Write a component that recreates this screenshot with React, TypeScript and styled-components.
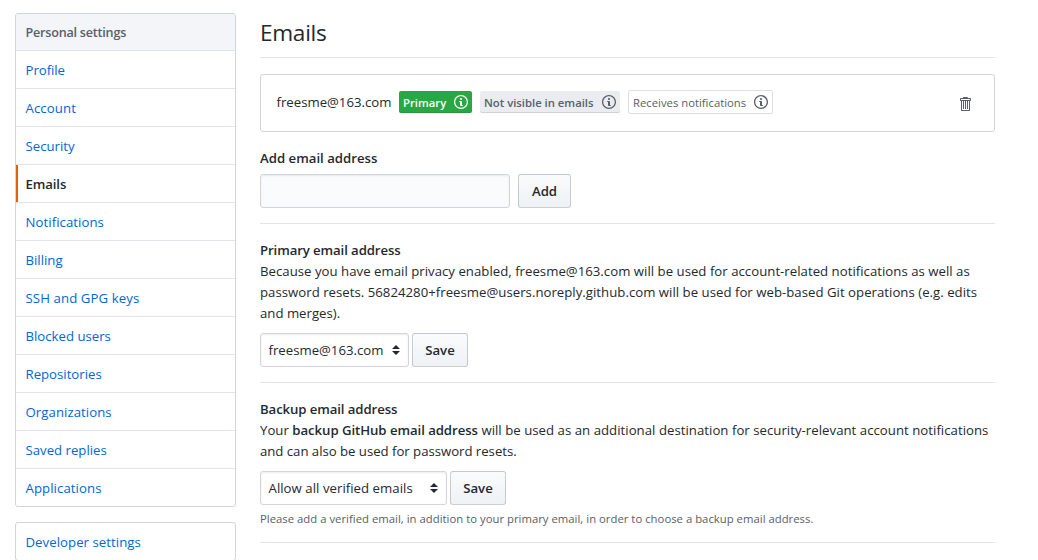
import React from "react";
import styled, { createGlobalStyle } from "styled-components";

const GlobalStyle = createGlobalStyle`
  * { box-sizing: border-box; }
  body {
    margin: 0;
    height: 560px;
    overflow: hidden;
    background: #fff;
    color: #24292e;
    font: 13.2px/21px "Open Sans", "Noto Sans", sans-serif;
  }
`;

const Page = styled.div`
  display: flex;
  align-items: flex-start;
  gap: 24px;
  height: 560px;
  padding: 13px 43px 0 15px;
  overflow: hidden;
`;

const Sidebar = styled.aside`
  display: flex;
  flex-direction: column;
  gap: 15px;
  width: 221px;
  flex: none;
`;

const Menu = styled.nav`
  border: 1px solid #d1d5da;
  border-radius: 3px;
  overflow: hidden;
`;

const MenuHeading = styled.div`
  height: 37px;
  padding: 9px 9.5px 7px;
  background: #f3f5f8;
  border-bottom: 1px solid #e1e4e8;
  color: #586069;
  font-size: 12.6px;
  font-weight: 600;
  line-height: 20px;
`;

const MenuItem = styled.a<{ $active?: boolean }>`
  display: block;
  height: 38px;
  padding: 9px 9.5px 7px;
  border-bottom: 1px solid #e1e4e8;
  color: ${(p) => (p.$active ? "#24292e" : "#0366d6")};
  font-weight: ${(p) => (p.$active ? 600 : 400)};
  box-shadow: ${(p) => (p.$active ? "inset 2px 0 0 #e36209" : "none")};
  &:last-child { height: 37px; border-bottom: 0; }
`;

const Fit = styled.span<{ $ls?: number }>`
  letter-spacing: ${(p) => p.$ls ?? 0}px;
  white-space: nowrap;
`;

const Main = styled.main`
  width: 735px;
  flex: none;
`;

const Title = styled.h2`
  margin: 0 0 16px;
  height: 45px;
  padding-top: 2px;
  border-bottom: 1px solid #e1e4e8;
  font-size: 22.6px;
  font-weight: 400;
  line-height: 36px;
`;

const EmailBox = styled.div`
  display: flex;
  align-items: center;
  height: 58px;
  padding: 0 23px 2px 15.5px;
  border: 1px solid #d1d5da;
  border-radius: 3px;
`;

const Address = styled.span`
  width: 115px;
  margin-right: 7.5px;
`;

const Badge = styled.span<{ $kind: "primary" | "muted" | "outline"; $width: number }>`
  display: flex;
  align-items: center;
  justify-content: space-between;
  width: ${(p) => p.$width}px;
  height: ${(p) => (p.$kind === "outline" ? 24 : 22)}px;
  margin-right: 8px;
  padding: 0 4px;
  border-radius: 2px;
  font-size: 11.3px;
  font-weight: ${(p) => (p.$kind === "outline" ? 400 : 600)};
  color: ${(p) => (p.$kind === "primary" ? "#fff" : "#586069")};
  background: ${(p) => ({ primary: "#28a745", muted: "#eaecef", outline: "#fff" })[p.$kind]};
  border: ${(p) => (p.$kind === "outline" ? "1px solid #dcdfe2" : "0")};
  box-shadow: ${(p) => (p.$kind === "outline" ? "none" : "inset 0 -1px 0 rgba(27,31,35,.12)")};
`;

const Icon = styled.svg`
  display: block;
  flex: none;
  fill: currentColor;
`;

const TrashButton = styled.span`
  margin-left: auto;
  padding-top: 4px;
  color: #586069;
`;

const Section = styled.section<{ $top: number; $height: number }>`
  height: ${(p) => p.$height}px;
  padding-top: ${(p) => p.$top}px;
  border-bottom: 1px solid #e1e4e8;
`;

const Label = styled.div`
  font-weight: 600;
`;

const Row = styled.div<{ $gap: number; $top: number }>`
  display: flex;
  gap: ${(p) => p.$gap}px;
  margin-top: ${(p) => p.$top}px;
`;

const Input = styled.input`
  width: 250px;
  height: 34px;
  border: 1px solid #d1d5da;
  border-radius: 3px;
  background: #fafbfc;
  box-shadow: inset 0 1px 2px rgba(27, 31, 35, 0.075);
`;

const Button = styled.button<{ $width: number }>`
  width: ${(p) => p.$width}px;
  height: 34px;
  padding: 0;
  border: 1px solid rgba(27, 31, 35, 0.2);
  border-radius: 3px;
  background: linear-gradient(-180deg, #fafbfc, #eff3f6 90%);
  color: #24292e;
  font: inherit;
  font-weight: 600;
`;

const Select = styled.div<{ $width: number }>`
  display: flex;
  align-items: center;
  justify-content: space-between;
  width: ${(p) => p.$width}px;
  height: 34px;
  padding: 0 8px 0 7.5px;
  border: 1px solid #d1d5da;
  border-radius: 3px;
  box-shadow: inset 0 1px 2px rgba(27, 31, 35, 0.075);
`;

const TextLine = styled.div`
  height: 21px;
`;

const Strong = styled.b`
  font-weight: 600;
  letter-spacing: -0.06px;
`;

const Note = styled.div`
  margin-top: 3px;
  font-size: 11.3px;
  color: #586069;
`;

const InfoIcon = () => (
  <Icon width="14" height="16" viewBox="0 0 14 16">
    <path
      fillRule="evenodd"
      d="M6.3 5.69a.942.942 0 0 1-.28-.7c0-.28.09-.52.28-.7.19-.18.42-.28.7-.28.28 0 .52.09.7.28.18.19.28.42.28.7 0 .28-.09.52-.28.7a1 1 0 0 1-.7.3c-.28 0-.52-.11-.7-.3zM8 7.99c-.02-.25-.11-.48-.31-.69-.2-.19-.42-.3-.69-.31H6c-.27.02-.48.13-.69.31-.2.2-.3.44-.31.69h1v3c.02.27.11.5.31.69.2.2.42.31.69.31h1c.27 0 .48-.11.69-.31.2-.19.3-.42.31-.69H8V7.98v.01zM7 2.3c-3.14 0-5.7 2.54-5.7 5.68 0 3.14 2.56 5.7 5.7 5.7s5.7-2.55 5.7-5.7c0-3.15-2.56-5.69-5.7-5.69v.01zM7 .98c3.86 0 7 3.14 7 7s-3.14 7-7 7-7-3.12-7-7 3.14-7 7-7z"
    />
  </Icon>
);

const TrashIcon = () => (
  <Icon width="12" height="16" viewBox="0 0 12 16">
    <path
      fillRule="evenodd"
      d="M11 2H9c0-.55-.45-1-1-1H5c-.55 0-1 .45-1 1H2c-.55 0-1 .45-1 1v1c0 .55.45 1 1 1v9c0 .55.45 1 1 1h7c.55 0 1-.45 1-1V5c.55 0 1-.45 1-1V3c0-.55-.45-1-1-1zm-1 12H3V5h1v8h1V5h1v8h1V5h1v8h1V5h1v9zm1-10H2V3h9v1z"
    />
  </Icon>
);

const Carets = () => (
  <Icon width="8" height="10" viewBox="0 0 8 10">
    <path d="M0 4L4 0l4 4zM0 6h8L4 10z" />
  </Icon>
);

const menu: { label: string; ls?: number }[] = [
  { label: "Profile", ls: -0.04 },
  { label: "Account", ls: 0.1 },
  { label: "Security" },
  { label: "Emails", ls: -0.1 },
  { label: "Notifications", ls: 0.06 },
  { label: "Billing" },
  { label: "SSH and GPG keys", ls: 0.1 },
  { label: "Blocked users" },
  { label: "Repositories" },
  { label: "Organizations", ls: 0.06 },
  { label: "Saved replies" },
  { label: "Applications", ls: 0.08 },
];

export default function App() {
  return (
    <Page>
      <GlobalStyle />
      <Sidebar>
        <Menu>
          <MenuHeading><Fit $ls={-0.22}>Personal settings</Fit></MenuHeading>
          {menu.map((m) => (
            <MenuItem key={m.label} $active={m.label === "Emails"}>
              <Fit $ls={m.ls}>{m.label}</Fit>
            </MenuItem>
          ))}
        </Menu>
        <Menu>
          <MenuItem><Fit $ls={0.05}>Developer settings</Fit></MenuItem>
        </Menu>
      </Sidebar>
      <Main>
        <Title><Fit $ls={-0.3}>Emails</Fit></Title>
        <EmailBox>
          <Address><Fit>freesme@163.com</Fit></Address>
          <Badge $kind="primary" $width={73}><Fit>Primary</Fit><InfoIcon /></Badge>
          <Badge $kind="muted" $width={140}><Fit>Not visible in emails</Fit><InfoIcon /></Badge>
          <Badge $kind="outline" $width={145}><Fit>Receives notifications</Fit><InfoIcon /></Badge>
          <TrashButton><TrashIcon /></TrashButton>
        </EmailBox>
        <Section $top={16} $height={92}>
          <Label><Fit>Add email address</Fit></Label>
          <Row $gap={8} $top={5}>
            <Input />
            <Button $width={53}><Fit>Add</Fit></Button>
          </Row>
        </Section>
        <Section $top={16} $height={159}>
          <Label><Fit $ls={-0.1}>Primary email address</Fit></Label>
          <TextLine><Fit $ls={0.022}>Because you have email privacy enabled, freesme@163.com will be used for account-related notifications as well as</Fit></TextLine>
          <TextLine><Fit $ls={0.022}>password resets. 56824280+freesme@users.noreply.github.com will be used for web-based Git operations (e.g. edits</Fit></TextLine>
          <TextLine><Fit>and merges).</Fit></TextLine>
          <Row $gap={3} $top={9}>
            <Select $width={149}><Fit>freesme@163.com</Fit><Carets /></Select>
            <Button $width={56}><Fit>Save</Fit></Button>
          </Row>
        </Section>
        <Section $top={16} $height={160}>
          <Label><Fit $ls={-0.1}>Backup email address</Fit></Label>
          <TextLine><Fit $ls={0.03}>Your <Strong>backup GitHub email address</Strong> will be used as an additional destination for security-relevant account notifications</Fit></TextLine>
          <TextLine><Fit $ls={-0.025}>and can also be used for password resets.</Fit></TextLine>
          <Row $gap={3} $top={9}>
            <Select $width={187}><Fit $ls={0.04}>Allow all verified emails</Fit><Carets /></Select>
            <Button $width={56}><Fit>Save</Fit></Button>
          </Row>
          <Note><Fit $ls={0.02}>Please add a verified email, in addition to your primary email, in order to choose a backup email address.</Fit></Note>
        </Section>
      </Main>
    </Page>
  );
}
